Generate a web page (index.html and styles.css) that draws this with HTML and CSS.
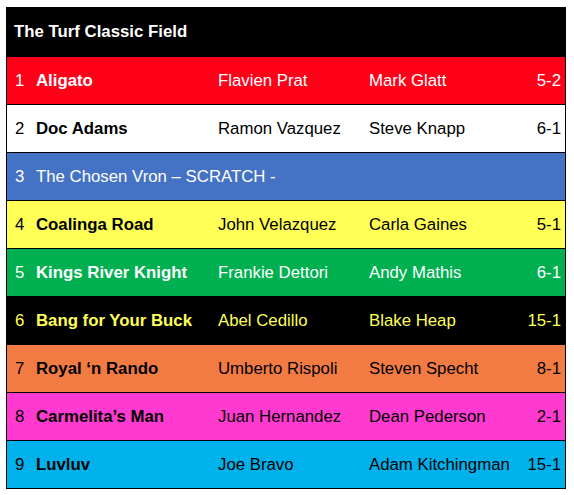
FILE: index.html
```html
<!DOCTYPE html>
<html>
<head>
<meta charset="utf-8">
<link rel="stylesheet" href="styles.css">
</head>
<body>
<div class="field">
  <div class="row head"><span class="title">The Turf Classic Field</span></div>
  <div class="row red"><span>1</span><span class="horse">Aligato</span><span>Flavien Prat</span><span>Mark Glatt</span><span class="odds">5-2</span></div>
  <div class="row white"><span>2</span><span class="horse">Doc Adams</span><span>Ramon Vazquez</span><span>Steve Knapp</span><span class="odds">6-1</span></div>
  <div class="row blue"><span>3</span><span class="scratch">The Chosen Vron – SCRATCH -</span></div>
  <div class="row yellow"><span>4</span><span class="horse">Coalinga Road</span><span>John Velazquez</span><span>Carla Gaines</span><span class="odds">5-1</span></div>
  <div class="row green"><span>5</span><span class="horse">Kings River Knight</span><span>Frankie Dettori</span><span>Andy Mathis</span><span class="odds">6-1</span></div>
  <div class="row black"><span>6</span><span class="horse">Bang for Your Buck</span><span>Abel Cedillo</span><span>Blake Heap</span><span class="odds">15-1</span></div>
  <div class="row orange"><span>7</span><span class="horse">Royal ‘n Rando</span><span>Umberto Rispoli</span><span>Steven Specht</span><span class="odds">8-1</span></div>
  <div class="row pink"><span>8</span><span class="horse">Carmelita’s Man</span><span>Juan Hernandez</span><span>Dean Pederson</span><span class="odds">2-1</span></div>
  <div class="row cyan"><span>9</span><span class="horse">Luvluv</span><span>Joe Bravo</span><span>Adam Kitchingman</span><span class="odds">15-1</span></div>
</div>
</body>
</html>
```
FILE: styles.css
```css
html, body { margin: 0; padding: 0; background: #fff; }
body { padding: 7px 0 0 6px; }
.field {
  width: 558px;
  border: 1px solid #000;
  font-family: "Liberation Sans", Arial, sans-serif;
  font-size: 16.8px;
}
.row {
  display: grid;
  grid-template-columns: 21px 182px 151px 1fr auto;
  align-items: center;
  height: 47px;
  padding: 0 4px 0 8px;
  border-top: 1px solid #000;
  white-space: nowrap;
}
.row.head { height: 48px; border-top: none; padding-left: 7px; background: #000; color: #fff; }
.title { font-weight: bold; grid-column: 1 / 4; }
.horse { font-weight: bold; }
.scratch { grid-column: 2 / 6; }
.odds { text-align: right; }
.red { background: #ff0019; color: #fff; }
.white { background: #fff; color: #000; }
.blue { background: #4472c4; color: #fff; }
.yellow { background: #ffff55; color: #000; }
.green { background: #00b050; color: #fff; }
.black { background: #000; color: #ffff55; }
.orange { background: #f27b44; color: #000; }
.pink { background: #ff3ad0; color: #000; }
.cyan { background: #00b2ec; color: #000; }
```
